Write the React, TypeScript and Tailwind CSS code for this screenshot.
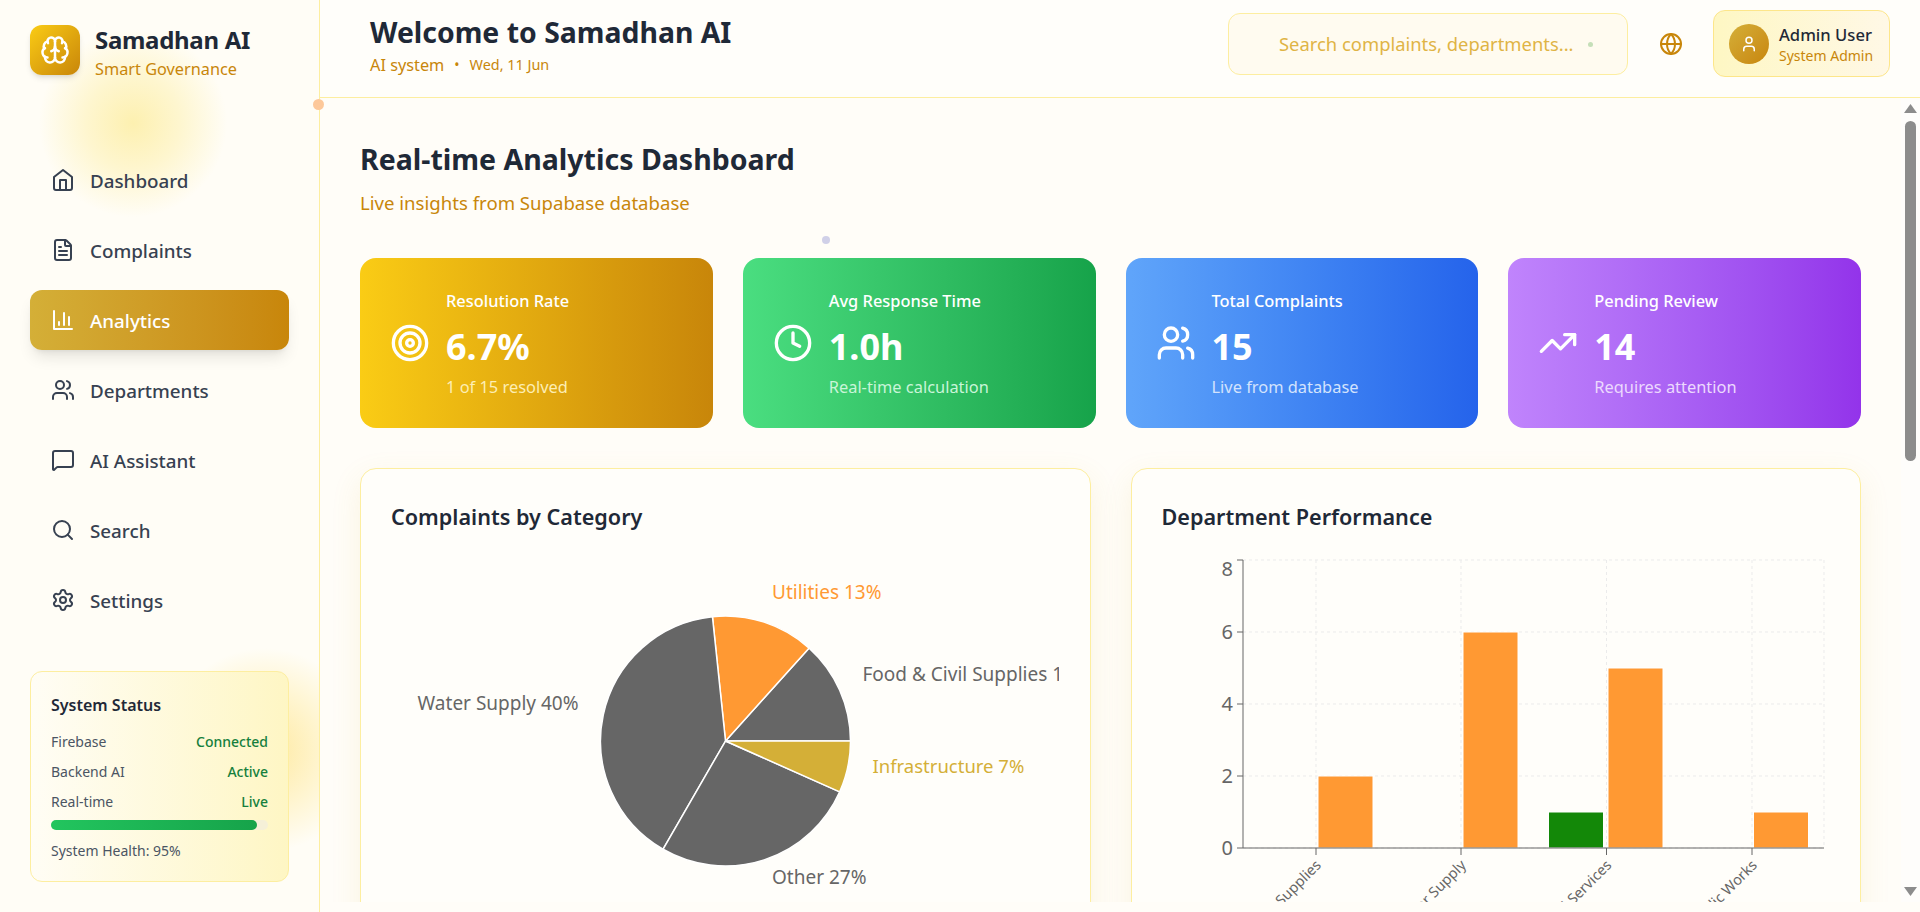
import React from "react";
import {
  Brain,
  Clock,
  FileText,
  Globe,
  MessageSquare,
  Search,
  Settings,
  Target,
  TrendingUp,
  User,
  Users,
} from "lucide-react";

const FONT = "font-['Noto_Sans','Open_Sans',sans-serif]";

// the package's current house / bar chart have rounded corners, the picture has square ones
function HomeIcon({ className }: { className?: string }) {
  return (
    <svg viewBox="0 0 24 24" fill="none" stroke="currentColor" strokeWidth="2" strokeLinecap="round" strokeLinejoin="round" className={className}>
      <path d="m3 9 9-7 9 7v11a2 2 0 0 1-2 2H5a2 2 0 0 1-2-2z" />
      <polyline points="9 22 9 12 15 12 15 22" />
    </svg>
  );
}

function AnalyticsIcon({ className }: { className?: string }) {
  return (
    <svg viewBox="0 0 24 24" fill="none" stroke="currentColor" strokeWidth="2" strokeLinecap="round" strokeLinejoin="round" className={className}>
      <path d="M3 3v18h18" />
      <path d="M18 17V9" />
      <path d="M13 17V5" />
      <path d="M8 17v-3" />
    </svg>
  );
}

const navItems = [
  { label: "Dashboard", icon: HomeIcon },
  { label: "Complaints", icon: FileText },
  { label: "Analytics", icon: AnalyticsIcon, active: true },
  { label: "Departments", icon: Users },
  { label: "AI Assistant", icon: MessageSquare },
  { label: "Search", icon: Search },
  { label: "Settings", icon: Settings },
];

const statCards = [
  { title: "Resolution Rate", value: "6.7%", sub: "1 of 15 resolved", icon: Target, bg: "bg-gradient-to-r from-[#facc15] to-[#c8860a]", subColor: "text-[#fdeeb4]" },
  { title: "Avg Response Time", value: "1.0h", sub: "Real-time calculation", icon: Clock, bg: "bg-gradient-to-r from-[#4ade80] to-[#16a34a]", subColor: "text-[#c9f5d8]" },
  { title: "Total Complaints", value: "15", sub: "Live from database", icon: Users, bg: "bg-gradient-to-r from-[#60a5fa] to-[#2563eb]", subColor: "text-[#d3e3fd]" },
  { title: "Pending Review", value: "14", sub: "Requires attention", icon: TrendingUp, bg: "bg-gradient-to-r from-[#c084fc] to-[#9333ea]", subColor: "text-[#ecd9fe]" },
];

// pie slices run counter-clockwise from 3 o'clock, like the chart lib does
const slices = [
  { value: 2, fill: "#666666" },
  { value: 2, fill: "#ff9933" },
  { value: 6, fill: "#666666" },
  { value: 4, fill: "#666666" },
  { value: 1, fill: "#d4af37" },
];

function slicePath(startDeg: number, endDeg: number) {
  const cx = 334.5;
  const cy = 200;
  const r = 125;
  const a = (startDeg * Math.PI) / 180;
  const b = (endDeg * Math.PI) / 180;
  const large = endDeg - startDeg > 180 ? 1 : 0;
  return `M${cx} ${cy}L${cx + r * Math.cos(a)} ${cy - r * Math.sin(a)}A${r} ${r} 0 ${large} 0 ${cx + r * Math.cos(b)} ${cy - r * Math.sin(b)}Z`;
}

function PieChart() {
  let angle = 0;
  return (
    <svg width="668" height="400" className="block">
      {slices.map((s, i) => {
        const start = angle;
        angle += (s.value / 15) * 360;
        return <path key={i} d={slicePath(start, angle)} fill={s.fill} stroke="#fff" strokeWidth="1.5" />;
      })}
      <g fontSize="19">
        <text x="381" y="58" fill="#ff9933">Utilities 13%</text>
        <text x="471.5" y="140" fill="#666666">Food &amp; Civil Supplies 13%</text>
        <text x="187.5" y="169" fill="#666666" textAnchor="end">Water Supply 40%</text>
        <text x="481.5" y="232" fill="#d4af37" fontSize="18.5">Infrastructure 7%</text>
        <text x="381" y="343" fill="#666666">Other 27%</text>
      </g>
    </svg>
  );
}

const bars = [
  { x: 156, w: 55, v: 2, fill: "#ff9933" },
  { x: 301, w: 55, v: 6, fill: "#ff9933" },
  { x: 386.5, w: 55, v: 1, fill: "#138808" },
  { x: 446, w: 55, v: 5, fill: "#ff9933" },
  { x: 591.5, w: 55, v: 1, fill: "#ff9933" },
];

const xTicks = [
  { x: 154, label: "Food & Civil Supplies" },
  { x: 299, label: "Water Supply" },
  { x: 444.5, label: "Municipal Services" },
  { x: 590, label: "Public Works" },
];

function BarChart() {
  const top = 19;
  const bottom = 307;
  const left = 81;
  const right = 662;
  return (
    <svg width="668" height="400" className="block">
      <g stroke="#ebebeb" strokeDasharray="3 3" fill="none">
        {[0, 2, 4, 6, 8].map((v) => (
          <line key={v} x1={left} x2={right} y1={bottom - v * 36} y2={bottom - v * 36} />
        ))}
        {[154, 299, 444.5, 590, 662].map((x) => (
          <line key={x} x1={x} x2={x} y1={top} y2={bottom} />
        ))}
      </g>
      {bars.map((b, i) => (
        <rect key={i} x={b.x} y={bottom - b.v * 36} width={b.w} height={b.v * 36} fill={b.fill} stroke="#fff" />
      ))}
      <g stroke="#666666" fill="none">
        <line x1={left} x2={left} y1={top} y2={bottom} />
        <line x1={left} x2={right} y1={bottom} y2={bottom} />
        {[0, 2, 4, 6, 8].map((v) => (
          <line key={v} x1={left - 6} x2={left} y1={bottom - v * 36} y2={bottom - v * 36} />
        ))}
        {xTicks.map((t) => (
          <line key={t.x} x1={t.x} x2={t.x} y1={bottom} y2={bottom + 7} />
        ))}
      </g>
      <g fontSize="20" fill="#666666" textAnchor="end">
        {[0, 2, 4, 6, 8].map((v) => (
          <text key={v} x={left - 10} y={bottom - v * 36 + (v === 8 ? 16 : 7)}>{v}</text>
        ))}
      </g>
      <g fontSize="14.5" fill="#666666" textAnchor="end">
        {xTicks.map((t) => (
          <text key={t.x} transform={`translate(${t.x + 6} ${bottom + 18}) rotate(-45)`}>{t.label}</text>
        ))}
      </g>
    </svg>
  );
}

function Sidebar() {
  return (
    <aside className="relative flex h-full w-[320px] shrink-0 flex-col overflow-hidden border-r border-[#fdeea0] bg-[#fffdf6]">
      <div className="absolute left-[38px] top-[28px] h-[190px] w-[190px] rounded-full bg-[radial-gradient(circle,#fdf0b0_0%,#fef6cf_35%,transparent_70%)]" />
      <div className="absolute left-[170px] top-[640px] h-[220px] w-[190px] rounded-full bg-[radial-gradient(circle,#fee9a0_0%,#fff5d0_40%,transparent_70%)]" />

      <div className="relative flex items-start gap-[15px] px-[30px] pt-[25px]">
        <div className="flex h-[50px] w-[50px] items-center justify-center rounded-xl bg-gradient-to-br from-[#facc15] to-[#c8860a] shadow-md">
          <Brain className="h-[30px] w-[30px] text-white" />
        </div>
        <div>
          <div className="text-[24px] font-bold leading-[30px] tracking-[-0.3px] text-[#1f2937]">Samadhan AI</div>
          <div className="mt-[3px] text-[16.3px] leading-[23px] text-[#c8860a]">Smart Governance</div>
        </div>
      </div>

      <nav className="relative mt-[69px] flex flex-col gap-[10px] px-[30px]">
        {navItems.map(({ label, icon: Icon, active }) => (
          <div
            key={label}
            className={
              active
                ? "flex h-[60px] items-center gap-[15px] rounded-xl bg-gradient-to-r from-[#d4af37] to-[#c8860a] px-[21px] text-white shadow-lg"
                : "flex h-[60px] items-center gap-[15px] rounded-xl px-[21px] text-[#374151]"
            }
          >
            <Icon className="h-6 w-6 shrink-0" />
            <span className="mt-[2px] text-[18.8px] font-medium">{label}</span>
          </div>
        ))}
      </nav>

      <div className="relative mx-[30px] mt-[41px] rounded-xl border border-[#fdeea0] bg-gradient-to-r from-[#fffdf5] to-[#fef6c4] px-[20px] pb-[20px] pt-[22px]">
        <div className="text-[16px] font-semibold leading-[22px] text-[#1f2937]">System Status</div>
        <div className="mt-[14px] flex flex-col gap-[7px] text-[14px] leading-[23px]">
          <div className="flex justify-between text-[#4b5563]">
            <span>Firebase</span>
            <span className="font-medium text-[#15803d]">Connected</span>
          </div>
          <div className="flex justify-between text-[#4b5563]">
            <span>Backend AI</span>
            <span className="font-medium text-[#15803d]">Active</span>
          </div>
          <div className="flex justify-between text-[#4b5563]">
            <span>Real-time</span>
            <span className="font-medium text-[#15803d]">Live</span>
          </div>
        </div>
        <div className="mt-[7px] h-[10px] w-full rounded-full bg-[#f5f0d8]">
          <div className="h-full w-[95%] rounded-full bg-gradient-to-r from-[#22c55e] to-[#16a34a]" />
        </div>
        <div className="mt-[11px] text-[14px] leading-[20px] text-[#4b5563]">System Health: 95%</div>
      </div>
    </aside>
  );
}

function Header() {
  return (
    <header className="flex h-[98px] shrink-0 items-center justify-between border-b border-[#fdeea0] bg-[#fffefa] pb-[10px] pl-[50px] pr-[30px]">
      <div className="mt-[2px]">
        <h1 className="text-[28.4px] font-bold leading-[36px] text-[#1f2937]">Welcome to Samadhan AI</h1>
        <div className="mt-[4px] flex items-center gap-[10px] text-[#c8860a]">
          <span className="text-[16.3px] leading-[22px]">AI system</span>
          <span className="text-[14px] leading-[22px]">•</span>
          <span className="text-[14.4px] leading-[22px]">Wed, 11 Jun</span>
        </div>
      </div>
      <div className="flex items-center">
        <div className="relative flex h-[62px] w-[400px] items-center rounded-xl border border-[#fdeea0] bg-[#fffbf0] pl-[50px] pt-[1px] text-[18.4px] text-[#dfb445]">
          Search complaints, departments...
          <span className="absolute left-[359px] top-[28px] h-[5px] w-[5px] rounded-full bg-[#c5dfb8]" />
        </div>
        <Globe className="ml-[31px] h-6 w-6 text-[#c8860a]" />
        <div className="ml-[30px] flex h-[67px] w-[177px] items-center gap-[10px] rounded-xl border border-[#fde68a] bg-gradient-to-r from-[#fef7c3] to-[#fff8e6] pl-[15px]">
          <div className="flex h-10 w-10 shrink-0 items-center justify-center rounded-full bg-gradient-to-br from-[#d4af37] to-[#c8860a]">
            <User className="h-[18px] w-[18px] text-white" />
          </div>
          <div className="mt-[3px]">
            <div className="whitespace-nowrap text-[16.6px] font-medium leading-[22px] text-[#1f2937]">Admin User</div>
            <div className="whitespace-nowrap text-[14px] leading-[20px] text-[#c8860a]">System Admin</div>
          </div>
        </div>
      </div>
    </header>
  );
}

function StatCard({ title, value, sub, icon: Icon, bg, subColor }: (typeof statCards)[number]) {
  return (
    <div className={`flex h-[170px] items-center gap-4 rounded-2xl px-[30px] text-white ${bg}`}>
      <Icon className="h-10 w-10 shrink-0" strokeWidth={2} />
      <div className="pt-[2px]">
        <div className="text-[16.4px] font-medium leading-[22px]">{title}</div>
        <div className="mt-[11px] text-[36px] font-bold leading-[48px]">{value}</div>
        <div className={`mt-[5px] text-[16.4px] leading-[22px] ${subColor}`}>{sub}</div>
      </div>
    </div>
  );
}

function ScrollBar() {
  return (
    <div className="flex h-full w-[19px] shrink-0 flex-col items-center bg-[#fefdfb] pt-[2px]">
      <svg width="19" height="17" className="shrink-0"><path d="M3 13H16L9.5 4Z" fill="#8c8c8c" /></svg>
      <div className="mt-[4px] h-[340px] w-[11px] rounded-full bg-[#8c8c8c]" />
      <div className="grow" />
      <svg width="19" height="17" className="shrink-0"><path d="M3 2H16L9.5 11Z" fill="#8c8c8c" /></svg>
    </div>
  );
}

export default function App() {
  return (
    <div className={`relative flex h-[912px] w-[1920px] overflow-hidden bg-[#fffdf8] ${FONT}`}>
      <Sidebar />
      <div className="flex h-full min-w-0 grow flex-col">
        <Header />
        <div className="flex min-h-0 grow pb-[10px]">
          <main className="relative min-w-0 grow overflow-hidden bg-[#fffdf8] px-[40px] pt-[41px]">
            <h2 className="text-[28.5px] font-bold leading-[40px] text-[#1f2937]">Real-time Analytics Dashboard</h2>
            <p className="mt-[11px] text-[18.6px] leading-[26px] text-[#c8860a]">Live insights from Supabase database</p>
            <div className="mt-[42px] grid grid-cols-4 gap-[30px]">
              {statCards.map((c) => (
                <StatCard key={c.title} {...c} />
              ))}
            </div>
            <div className="mt-[40px] grid grid-cols-2 gap-[40px]">
              <section className="h-[520px] rounded-2xl border border-[#fdeea0] bg-[#fffefa] p-[30px] shadow-[0_10px_30px_rgba(212,175,55,0.12)]">
                <h3 className="mt-[4px] text-[21.6px] font-semibold leading-[28px] text-[#1f2937]">Complaints by Category</h3>
                <div className="mt-[10px]"><PieChart /></div>
              </section>
              <section className="h-[520px] rounded-2xl border border-[#fdeea0] bg-[#fffefa] p-[30px] shadow-[0_10px_30px_rgba(212,175,55,0.12)]">
                <h3 className="mt-[4px] text-[21.6px] font-semibold leading-[28px] text-[#1f2937]">Department Performance</h3>
                <div className="mt-[10px]"><BarChart /></div>
              </section>
            </div>
            <span className="absolute left-[502px] top-[138px] h-2 w-2 rounded-full bg-[#d0d0e8]" />
          </main>
          <ScrollBar />
        </div>
      </div>
      <span className="absolute left-[313px] top-[99px] h-[11px] w-[11px] rounded-full bg-[#fdc89a]" />
    </div>
  );
}
